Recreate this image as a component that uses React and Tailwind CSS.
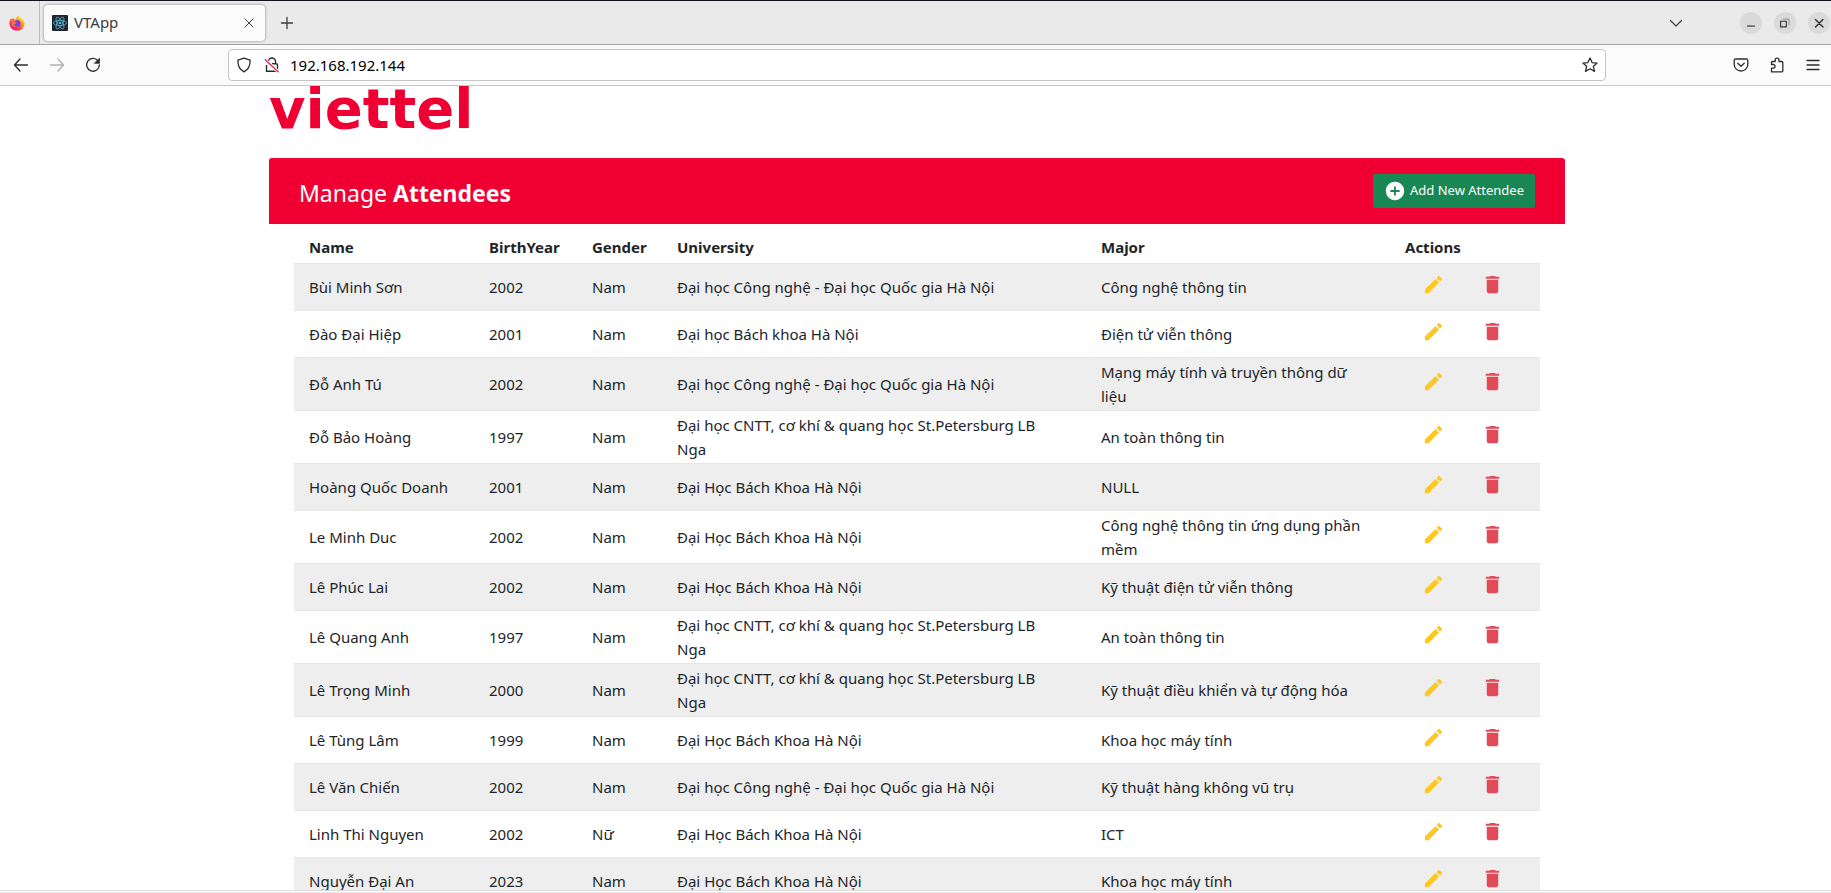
import React from 'react';
import { MdEdit, MdDelete, MdAddCircle } from 'react-icons/md';

const VNU = 'Đại học Công nghệ - Đại học Quốc gia Hà Nội';
const HUST = 'Đại Học Bách Khoa Hà Nội';
const ITMO = 'Đại học CNTT, cơ khí & quang học St.Petersburg LB Nga';

const attendees = [
  ['Bùi Minh Sơn', '2002', 'Nam', VNU, 'Công nghệ thông tin'],
  ['Đào Đại Hiệp', '2001', 'Nam', 'Đại học Bách khoa Hà Nội', 'Điện tử viễn thông'],
  ['Đỗ Anh Tú', '2002', 'Nam', VNU, 'Mạng máy tính và truyền thông dữ liệu'],
  ['Đỗ Bảo Hoàng', '1997', 'Nam', ITMO, 'An toàn thông tin'],
  ['Hoàng Quốc Doanh', '2001', 'Nam', HUST, 'NULL'],
  ['Le Minh Duc', '2002', 'Nam', HUST, 'Công nghệ thông tin ứng dụng phần mềm'],
  ['Lê Phúc Lai', '2002', 'Nam', HUST, 'Kỹ thuật điện tử viễn thông'],
  ['Lê Quang Anh', '1997', 'Nam', ITMO, 'An toàn thông tin'],
  ['Lê Trọng Minh', '2000', 'Nam', ITMO, 'Kỹ thuật điều khiển và tự động hóa'],
  ['Lê Tùng Lâm', '1999', 'Nam', HUST, 'Khoa học máy tính'],
  ['Lê Văn Chiến', '2002', 'Nam', VNU, 'Kỹ thuật hàng không vũ trụ'],
  ['Linh Thi Nguyen', '2002', 'Nữ', HUST, 'ICT'],
  ['Nguyễn Đại An', '2023', 'Nam', HUST, 'Khoa học máy tính'],
];

const headings = ['Name', 'BirthYear', 'Gender', 'University', 'Major', 'Actions'];

function Icon({ children, className = 'size-4' }) {
  return (
    <svg
      viewBox="0 0 16 16"
      fill="none"
      stroke="currentColor"
      strokeWidth="1.3"
      strokeLinecap="round"
      strokeLinejoin="round"
      className={className}
      aria-hidden="true"
    >
      {children}
    </svg>
  );
}

function FirefoxLogo() {
  return (
    <svg viewBox="0 0 16 16" className="size-4" aria-hidden="true">
      <defs>
        <linearGradient id="flame" x1="0.85" y1="0.1" x2="0.2" y2="0.95">
          <stop offset="0" stopColor="#fff44f" />
          <stop offset="0.35" stopColor="#ff980e" />
          <stop offset="0.7" stopColor="#ff3647" />
          <stop offset="1" stopColor="#e31587" />
        </linearGradient>
      </defs>
      <path
        d="M9.6.3c1 1 1.2 1.900 1.500 2.700.9.200 1.900 1 2.500 1.400.9 1 1.900 2.600 1.900 4.200A7.300 7.300 0 0 1 8.100 15.800 7.500 7.500 0 0 1 .4 8.400C.4 6.400 1.200 4.600 2.300 3.200l.5 1.200L4.300 2.600l.4 1.600c1 0 1.700.1 2.300.6C7 3 8 1.200 9.600.3z"
        fill="url(#flame)"
      />
      <circle cx="8" cy="8.600" r="3.600" fill="#7542e5" />
      <path d="M2.600 5c1.600-.8 3.600-.6 4.700.4-.3.900-1.500 1-1.800 1.300.2.700 1.700.4 2.100 1.100-.3 1.300-2 1.600-3.200 1.100C5 10.800 7 11.600 9 11.200c-2.500 2-6.200.6-6.900-2.700z" fill="#ff7139" />
    </svg>
  );
}

function ReactFavicon() {
  return (
    <svg viewBox="0 0 16 16" className="size-4" aria-hidden="true">
      <rect width="16" height="16" rx="1" fill="#20232a" />
      <g fill="none" stroke="#53b9d6" strokeWidth="0.8">
        <ellipse cx="8" cy="8" rx="6.600" ry="2.600" />
        <ellipse cx="8" cy="8" rx="6.600" ry="2.600" transform="rotate(60 8 8)" />
        <ellipse cx="8" cy="8" rx="6.600" ry="2.600" transform="rotate(120 8 8)" />
      </g>
      <circle cx="8" cy="8" r="1.300" fill="#53b9d6" />
    </svg>
  );
}

function TabStrip() {
  return (
    <div className="flex h-[45px] shrink-0 items-center border-t border-b border-t-[#16101a] border-b-[#a3a3a3] bg-[#eaeaea]">
      <button aria-label="Firefox View" className="flex h-full w-10 items-center border-r border-[#bcbcbc] pl-[9px]">
        <FirefoxLogo />
      </button>
      <div className="ml-1 flex h-9 w-[221px] items-center rounded bg-[#fbfbfb] px-2 shadow-[0_0_3px_rgba(0,0,0,0.45)]">
        <ReactFavicon />
        <span className="ml-1.5 flex-1 text-[15px] text-[#3c3c3c]">VTApp</span>
        <button aria-label="Close tab" className="pr-0.5 text-[#3c3c3c]">
          <Icon className="size-3">
            <path d="M2.500 2.500l11 11M13.500 2.500l-11 11" />
          </Icon>
        </button>
      </div>
      <button aria-label="New tab" className="ml-3.5 text-[#3c3c3c]">
        <Icon>
          <path d="M8 2.500v11M2.500 8h11" />
        </Icon>
      </button>
      <div className="ml-auto flex items-center gap-3">
        <button aria-label="List all tabs" className="mr-11 text-[#444]">
          <Icon>
            <path d="M2.500 5.500L8 11l5.500-5.500" />
          </Icon>
        </button>
        <button aria-label="Minimize" className="grid size-[22px] place-items-center rounded-full bg-[#dadada] text-[#333]">
          <Icon className="size-3.5">
            <path d="M3.500 11.500h9" strokeLinecap="butt" />
          </Icon>
        </button>
        <button aria-label="Restore" className="grid size-[22px] place-items-center rounded-full bg-[#dadada] text-[#333]">
          <Icon className="size-3.5">
            <path d="M3 6h6.500v6.500H3z" strokeLinejoin="miter" />
            <path d="M6 3.500h6.500V10" strokeWidth="1" stroke="#888" strokeLinejoin="miter" />
          </Icon>
        </button>
        <button aria-label="Close window" className="mr-px grid size-[22px] place-items-center rounded-full bg-[#dadada] text-[#333]">
          <Icon className="size-3.5">
            <path d="M4 4l8.500 8.500M12.500 4L4 12.500" strokeWidth="1.700" />
          </Icon>
        </button>
      </div>
    </div>
  );
}

function Toolbar() {
  return (
    <div className="flex h-[41px] shrink-0 items-center border-b border-[#c8c8c8] bg-[#fbfbfb] text-[#2c2c2c]">
      <div className="flex w-[228px] shrink-0 items-center gap-5 pl-[13px]">
        <button aria-label="Back">
          <Icon>
            <path d="M7 2L1.500 8 7 14M1.500 8h13" />
          </Icon>
        </button>
        <button aria-label="Forward" disabled className="text-[#b0b0b0]">
          <Icon>
            <path d="M9 2l5.500 6L9 14M14.500 8h-13" />
          </Icon>
        </button>
        <button aria-label="Reload">
          <Icon>
            <path d="M13 3.800A6.400 6.400 0 1 0 14.400 8" />
            <path d="M14.500 1.500v4.800H9.700z" fill="currentColor" strokeWidth="0.800" />
          </Icon>
        </button>
      </div>
      <div className="flex h-8 flex-1 items-center rounded border border-[#c6c6c6] bg-white px-[7px]">
        <Icon>
          <path d="M8 1.200L1.900 3.200c-.2 5.300 1.500 9.200 6.100 11.600 4.600-2.400 6.300-6.300 6.100-11.600z" />
        </Icon>
        <svg viewBox="0 0 16 16" fill="none" strokeWidth="1.400" className="ml-3 size-4" aria-hidden="true">
          <path d="M4.500 5V4.500a3.500 3.500 0 0 1 7 0v2.200M2.500 8v6.300h11V8a1.300 1.300 0 0 0-1.300-1.300H8" stroke="#2c2c2c" />
          <path d="M.8 2.200l13.800 13" stroke="#fff" strokeWidth="3" />
          <path d="M.8 2.200l13.800 13" stroke="#e22850" />
        </svg>
        <input
          aria-label="Address"
          defaultValue="192.168.192.144"
          className="ml-2.5 min-w-0 flex-1 bg-transparent text-[15px] text-black outline-none"
        />
        <button aria-label="Bookmark this page">
          <Icon>
            <path d="M8 1l2.100 4.600 5 .5-3.800 3.300 1.200 5L8 11.800l-4.500 2.600 1.200-5L.9 6.100l5-.5z" />
          </Icon>
        </button>
      </div>
      <div className="flex w-[225px] shrink-0 items-center justify-end gap-5 pr-2.5">
        <button aria-label="Save to Pocket">
          <Icon>
            <path d="M2.500 2h11A1.300 1.300 0 0 1 14.800 3.300V7.500a6.800 6.500 0 0 1-13.600 0V3.300A1.300 1.300 0 0 1 2.500 2z" />
            <path d="M4.800 6.200L8 9.200l3.200-3" />
          </Icon>
        </button>
        <button aria-label="Extensions">
          <Icon>
            <path d="M2.500 14.900h10.300a1 1 0 0 0 1-1V5.500a1 1 0 0 0-1-1H10V3a1.900 1.900 0 0 0-3.800 0v1.500H3.500a1 1 0 0 0-1 1v2h1.700a1.700 1.700 0 0 1 0 3.700H2.500z" />
          </Icon>
        </button>
        <button aria-label="Open application menu">
          <Icon>
            <path d="M2 3.500h12M2 8h12M2 12.500h12" />
          </Icon>
        </button>
      </div>
    </div>
  );
}

function AttendeeTable() {
  return (
    <table className="w-full table-fixed text-left text-[15px] leading-6">
      <colgroup>
        <col className="w-[180px]" />
        <col className="w-[103px]" />
        <col className="w-[85px]" />
        <col />
        <col className="w-[304px]" />
        <col className="w-[150px]" />
      </colgroup>
      <thead>
        <tr className="h-[39px]">
          {headings.map((h) => (
            <th key={h} scope="col" className="pt-2 pl-[15px] font-bold">
              {h}
            </th>
          ))}
        </tr>
      </thead>
      <tbody>
        {attendees.map(([name, birthYear, gender, university, major]) => (
          <tr
            key={name}
            className="h-[47px] border-t border-[#e6e6e6] odd:bg-[#eeeeee] last:bg-[#e1e1e1]"
          >
            <td className="py-0.5 pl-[15px]">{name}</td>
            <td className="py-0.5 pl-[15px]">{birthYear}</td>
            <td className="py-0.5 pl-[15px]">{gender}</td>
            <td className="py-0.5 pr-10 pl-[15px]">{university}</td>
            <td className="py-0.5 pr-[15px] pl-[15px]">{major}</td>
            <td className="pb-1">
              <div className="flex gap-9 pl-8">
                <button aria-label={`Edit ${name}`} className="text-[#ffc722]">
                  <MdEdit size={23} />
                </button>
                <button aria-label={`Delete ${name}`} className="text-[#e04a59]">
                  <MdDelete size={23} />
                </button>
              </div>
            </td>
          </tr>
        ))}
      </tbody>
    </table>
  );
}

export default function App() {
  return (
    <div className="flex h-screen flex-col overflow-hidden bg-white font-['Noto_Sans','Open_Sans',sans-serif] text-[#212529]">
      <TabStrip />
      <Toolbar />
      <main className="min-h-0 flex-1 pl-[3px]">
        <div className="mx-auto max-w-[1296px]">
          <div className="flex h-[72px] items-start">
            <a
              href="/"
              className="font-['DejaVu_Sans',sans-serif] text-[56px] leading-[46px] font-bold text-[#ee0033]"
            >
              viettel
            </a>
          </div>
          <header className="flex h-[66px] items-center justify-between rounded-t-[3px] bg-[#f00032] px-[30px] text-white">
            <h2 className="pt-1 text-[23px]">
              Manage <b className="font-bold">Attendees</b>
            </h2>
            <button className="flex h-[34px] items-center gap-1 rounded-xs bg-[#198754] px-[11px] text-[13px]">
              <MdAddCircle size={22} />
              <span>Add New Attendee</span>
            </button>
          </header>
          <div className="px-[25px]">
            <AttendeeTable />
          </div>
        </div>
      </main>
      <div className="relative z-10 h-[3px] shrink-0 border-t border-b border-t-[#dcdcdc] border-b-[#ebebeb] bg-white" />
    </div>
  );
}
